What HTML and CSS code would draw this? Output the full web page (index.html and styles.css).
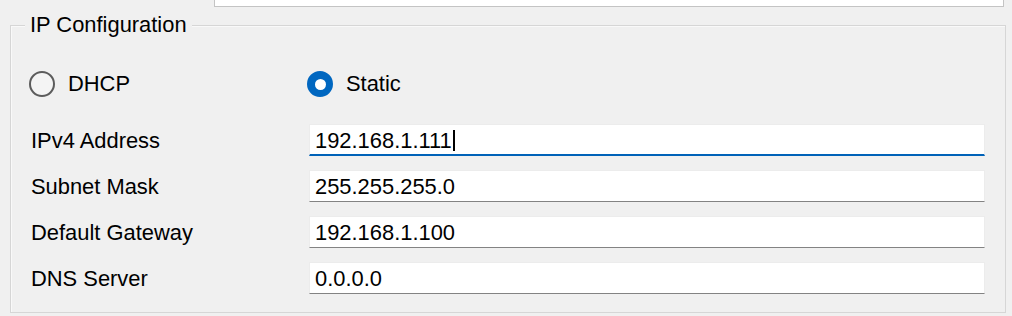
FILE: index.html
```html
<!DOCTYPE html>
<html lang="en">
<head>
<meta charset="utf-8">
<title>IP Configuration</title>
<link rel="stylesheet" href="styles.css">
</head>
<body>
<div class="top-field"></div>
<div class="group">
  <div class="legend">IP Configuration</div>
  <div class="radio-row">
    <label class="radio-item"><span class="radio"></span><span>DHCP</span></label>
    <label class="radio-item"><span class="radio checked"></span><span>Static</span></label>
  </div>
  <div class="fields">
    <div class="field-label">IPv4 Address</div>
    <div class="field focused"><span>192.168.1.111</span><span class="caret"></span></div>
    <div class="field-label">Subnet Mask</div>
    <div class="field"><span>255.255.255.0</span></div>
    <div class="field-label">Default Gateway</div>
    <div class="field"><span>192.168.1.100</span></div>
    <div class="field-label">DNS Server</div>
    <div class="field"><span>0.0.0.0</span></div>
  </div>
</div>
</body>
</html>
```

FILE: styles.css
```css
html, body {
  margin: 0;
  padding: 0;
  background: #f0f0f0;
}
body {
  width: 1012px;
  height: 316px;
  overflow: hidden;
  font-family: "Liberation Sans", Arial, sans-serif;
  font-size: 21.9px;
  color: #000;
}
.top-field {
  margin-left: 214px;
  width: 788px;
  height: 6px;
  background: #fff;
  border: 1px solid #c4c4c4;
  border-top: none;
}
.group {
  position: relative;
  margin: 18px 0 0 10px;
  border: 1px solid #d6d6d6;
  box-shadow: inset 1px 1px 0 #f9f9f9;
  padding: 44px 20px 18px 20px;
  box-sizing: border-box;
  width: 996px;
}
.legend {
  position: absolute;
  top: -13px;
  left: 14px;
  padding: 0 5px;
  background: #f0f0f0;
  line-height: 24px;
}
.radio-row {
  display: grid;
  grid-template-columns: 278px 1fr;
  height: 28px;
  align-items: center;
}
.radio-item {
  display: flex;
  align-items: center;
  gap: 13px;
  margin-left: -2px;
}
.radio {
  width: 26px;
  height: 26px;
  box-sizing: border-box;
  border-radius: 50%;
  border: 2px solid #5c5c5c;
  background: #f4f4f4;
  display: flex;
  align-items: center;
  justify-content: center;
}
.radio.checked {
  background: #0067c0;
  border-color: #0067c0;
}
.radio.checked::after {
  content: "";
  width: 11px;
  height: 11px;
  border-radius: 50%;
  background: #fff;
}
.fields {
  margin-top: 26px;
  display: grid;
  grid-template-columns: 278px 1fr;
  row-gap: 14px;
}
.field-label {
  display: flex;
  align-items: center;
  height: 32px;
  padding-top: 1px;
  box-sizing: border-box;
}
.field {
  height: 32px;
  box-sizing: border-box;
  background: #fff;
  border: 1px solid #ececec;
  border-bottom: 1px solid #838383;
  padding-left: 5px;
  padding-top: 1px;
  display: flex;
  align-items: center;
}
.field.focused {
  border-bottom: 2px solid #0062b8;
  padding-top: 2px;
}
.caret {
  display: inline-block;
  width: 2px;
  height: 21px;
  background: #000;
  margin-left: 1px;
}
```
